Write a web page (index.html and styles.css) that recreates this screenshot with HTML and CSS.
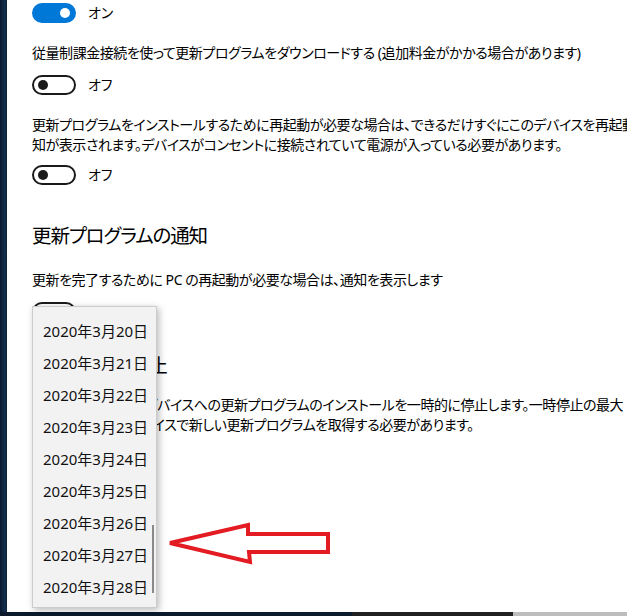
FILE: index.html
```html
<!DOCTYPE html>
<html lang="ja">
<head>
<meta charset="utf-8">
<title>Windows Update の詳細オプション</title>
<link rel="stylesheet" href="styles.css">
</head>
<body>
<div class="screen">
  <div class="desktop">
    <div class="strip"></div>
    <main class="settings">
      <div class="toggle-row first">
        <span class="toggle on"><span class="knob"></span></span>
        <span class="toggle-label">オン</span>
      </div>

      <p class="line">従量制課金接続を使って更新プログラムをダウンロードする (追加料金がかかる場合があります)</p>
      <div class="toggle-row">
        <span class="toggle"><span class="knob"></span></span>
        <span class="toggle-label">オフ</span>
      </div>

      <p class="line para">更新プログラムをインストールするために再起動が必要な場合は、できるだけすぐにこのデバイスを再起動します。再起動の前に通<br>知が表示されます。デバイスがコンセントに接続されていて電源が入っている必要があります。</p>
      <div class="toggle-row">
        <span class="toggle"><span class="knob"></span></span>
        <span class="toggle-label">オフ</span>
      </div>

      <h2 class="section-title">更新プログラムの通知</h2>
      <p class="line">更新を完了するために PC の再起動が必要な場合は、通知を表示します</p>
      <div class="toggle-row">
        <span class="toggle"><span class="knob"></span></span>
        <span class="toggle-label">オフ</span>
      </div>

      <h2 class="section-title second">更新の一時停止</h2>
      <p class="line para">一時停止中は、このデバイスへの更新プログラムのインストールを一時的に停止します。一時停止の最大<br>再開するときは、デバイスで新しい更新プログラムを取得する必要があります。</p>
    </main>
  </div>
  <footer class="taskbar">
    <span class="tb-start"></span>
    <span class="tb-app"></span>
    <span class="tb-tray"></span>
  </footer>

  <ul class="date-list">
    <li>2020年3月20日</li>
    <li>2020年3月21日</li>
    <li>2020年3月22日</li>
    <li>2020年3月23日</li>
    <li>2020年3月24日</li>
    <li>2020年3月25日</li>
    <li>2020年3月26日</li>
    <li>2020年3月27日</li>
    <li>2020年3月28日</li>
    <span class="scroll-thumb"></span>
  </ul>

  <svg class="pointer" width="627" height="616" viewBox="0 0 627 616">
    <polygon points="170,543 248,525 248,534 328,534 328,552 249,552 250,562"
             fill="none" stroke="#e31b23" stroke-width="4" stroke-linejoin="miter"/>
  </svg>
</div>
</body>
</html>
```

FILE: styles.css
```css
html, body {
  margin: 0;
  padding: 0;
  width: 627px;
  height: 616px;
  overflow: hidden;
  background: #ffffff;
}

body {
  font-family: "Noto Sans", "Noto Sans CJK JP", sans-serif;
  font-feature-settings: "palt";
  color: #000000;
}

.screen {
  position: relative;
  width: 627px;
  height: 616px;
  display: grid;
  grid-template-rows: 612px 4px;
}

.desktop {
  display: grid;
  grid-template-columns: 7px 1fr;
  min-height: 0;
}

.strip {
  background: linear-gradient(90deg, #0b1a2d 0, #14304f 70%, #0d2138 100%);
}

.settings {
  background: #ffffff;
  overflow: hidden;
  padding: 3px 0 0 25px;
  min-width: 0;
}

/* toggle switches */
.toggle-row {
  display: flex;
  align-items: center;
  gap: 12px;
  height: 20px;
  margin: 19px 0 20px;
}

.toggle-row.first {
  margin-top: 0;
}

.toggle {
  box-sizing: border-box;
  width: 44px;
  height: 20px;
  border: 2px solid #1a1a1a;
  border-radius: 10px;
  display: flex;
  align-items: center;
  padding: 0 4px;
}

.toggle .knob {
  width: 10px;
  height: 10px;
  border-radius: 50%;
  background: #1a1a1a;
}

.toggle.on {
  background: #0078d7;
  border-color: #0078d7;
  justify-content: flex-end;
}

.toggle.on .knob {
  background: #ffffff;
}

.toggle-label {
  font-size: 14px;
  line-height: 20px;
}

/* text lines */
.line {
  margin: 0;
  font-size: 14px;
  line-height: 20px;
  letter-spacing: -0.45px;
  white-space: nowrap;
}

.para {
  margin-bottom: 10px;
}

.line + .toggle-row {
  margin-top: 12px;
}

.para + .toggle-row {
  margin-top: 10px;
}

.section-title {
  margin: 37px 0 20px;
  font-size: 19.5px;
  font-weight: 400;
  letter-spacing: -1.1px;
  line-height: 28px;
}

.section-title.second {
  margin-top: 30px;
  margin-bottom: 15px;
  letter-spacing: 0;
}

/* taskbar along the bottom */
.taskbar {
  display: flex;
}

.tb-start {
  width: 352px;
  background: #0c1a2c;
}

.tb-app {
  width: 161px;
  background: #202020;
}

.tb-tray {
  flex: 1;
  background: #bdbdbd;
}

/* open date picker list */
.date-list {
  position: absolute;
  left: 32px;
  top: 306px;
  width: 125px;
  height: 302px;
  box-sizing: border-box;
  margin: 0;
  padding: 8px 0 0;
  list-style: none;
  background: #f2f2f2;
  border: 1px solid #cccccc;
  box-shadow: 2px 2px 7px rgba(0, 0, 0, 0.28);
  overflow: hidden;
}

.date-list li {
  height: 32px;
  line-height: 32px;
  padding-left: 10px;
  font-size: 15px;
  color: #111111;
  white-space: nowrap;
}

.scroll-thumb {
  position: absolute;
  left: 119px;
  top: 218px;
  width: 2px;
  height: 68px;
  background: #8a8a8a;
}

.pointer {
  position: absolute;
  left: 0;
  top: 0;
  pointer-events: none;
}
```
